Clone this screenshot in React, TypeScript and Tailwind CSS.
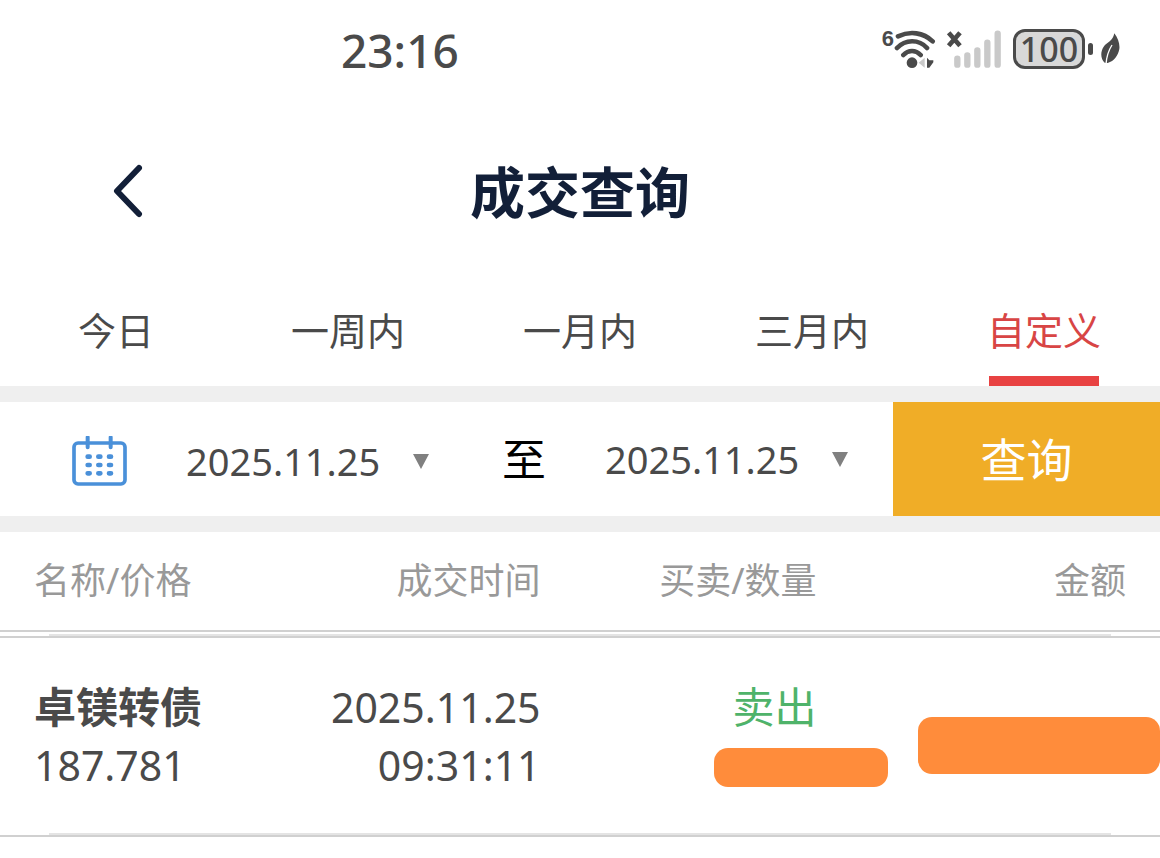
import React, { useState } from 'react'

const tabs = ['今日', '一周内', '一月内', '三月内', '自定义']

const records = [
  {
    name: '卓镁转债',
    price: '187.781',
    date: '2025.11.25',
    time: '09:31:11',
    side: '卖出',
  },
]

function StatusBar() {
  return (
    <div className="flex h-[100px] items-center justify-between pr-10 pl-[341px] text-[#4a4a4a]">
      <div className="text-[46px] leading-none font-medium">23:16</div>
      <div className="flex items-center pb-[3px]">
        <span className="self-start font-['Liberation_Sans'] text-[22px] leading-6 font-bold">6</span>
        {/* wifi icon */}
        <svg className="h-[44px] w-[43px]" viewBox="76 34 129 132" fill="none">
          <path
            d="M88 62C124 45 164 50 192 77M85 97C110 70 151 70 175 97M104 118C119 102 141 102 156 118"
            stroke="#4a4a4a"
            strokeWidth="14"
            strokeLinecap="round"
          />
          <circle cx="130" cy="141" r="16" fill="#4a4a4a" />
          <path d="M168 126V156L150 141Z" fill="#c9c9c9" />
          <path d="M175 126L182 134H194V140L182 156H175Z" fill="#4a4a4a" />
        </svg>
        {/* signal icon */}
        <svg className="ml-2 h-[44px] w-[58px]" viewBox="228 34 174 132" fill="none">
          <path
            d="M265 129V147M295 119V147M325 104V147M355 81V147M386 54V147"
            stroke="#c9c9c9"
            strokeWidth="19"
            strokeLinecap="round"
          />
          <path d="M239 51L273 90M273 51L239 90" stroke="#4a4a4a" strokeWidth="14" />
        </svg>
        {/* battery */}
        <div className="ml-[10px] flex h-10 w-[72px] items-center justify-center rounded-[12px] border-3 border-[#4a4a4a] bg-[#d8d8d8] text-[34px] leading-none font-medium">
          100
        </div>
        <div className="ml-[3px] h-3 w-[5px] rounded-full bg-[#4a4a4a]" />
        {/* leaf icon */}
        <svg className="ml-2 h-8 w-[19px]" viewBox="692 52 57 96" fill="none">
          <path
            d="M732 53C743 68 749 84 747 100C743 120 732 136 712 142L703 141C690 130 690 108 700 93C710 80 728 76 732 53Z"
            fill="#4a4a4a"
          />
          <path d="M725 88C716 102 709 118 707 146" stroke="#ffffff" strokeWidth="4" />
        </svg>
      </div>
    </div>
  )
}

function DateSelect({ label }: { label: string }) {
  return (
    <label className="flex items-center text-[#4a4a4a]">
      <select aria-label={label} className="appearance-none bg-transparent text-[38px] leading-[52px]">
        <option>2025.11.25</option>
      </select>
      <svg className="ml-8 h-[15px] w-4" viewBox="0 0 16 15">
        <path d="M0 0H16L8 15Z" fill="#808080" />
      </svg>
    </label>
  )
}

function Divider() {
  return (
    <tr>
      <td colSpan={4} className="border-b-2 border-[#d0d0d0] p-0">
        <div className="mx-[49px] h-[2px] bg-[#e4e4e4]" />
      </td>
    </tr>
  )
}

export default function App() {
  const [active, setActive] = useState(4)

  return (
    <div className="min-h-screen bg-white font-['Noto_Sans','Noto_Sans_CJK_SC',sans-serif]">
      <StatusBar />

      <header className="grid h-[180px] grid-cols-[1fr_auto_1fr] items-center pt-[2px]">
        <button aria-label="返回" className="ml-[113px] w-[30px]">
          {/* back icon */}
          <svg width="30" height="54" viewBox="0 0 30 54" fill="none">
            <path
              d="M26 4L4 27L26 50"
              stroke="#121f38"
              strokeWidth="6"
              strokeLinecap="round"
              strokeLinejoin="round"
            />
          </svg>
        </button>
        <h1 className="text-[55px] leading-none font-bold text-[#121f38]">成交查询</h1>
      </header>

      <nav className="grid h-[106px] grid-cols-5 pt-1">
        {tabs.map((tab, i) => (
          <button
            key={tab}
            onClick={() => setActive(i)}
            className={
              'flex flex-col items-center text-[38px] leading-[92px] ' +
              (i === active ? 'text-[#d84545]' : 'text-[#4a4a4a]')
            }
          >
            {tab}
            {i === active && <span className="h-[10px] w-[110px] bg-[#e84242]" />}
          </button>
        ))}
      </nav>

      <form
        onSubmit={(e) => e.preventDefault()}
        className="flex h-[146px] items-stretch border-y-16 border-[#efefef]"
      >
        <div className="flex flex-1 items-center pl-[72px]">
          <div className="flex items-center pt-1">
            {/* calendar icon */}
            <svg className="mr-[59px] h-[50px] w-[55px]" viewBox="35 50 165 150" fill="none">
              <rect x="41" y="71" width="153" height="123" rx="12" stroke="#4a90d9" strokeWidth="11" />
              <path d="M82 54V84M151 54V84" stroke="#4a90d9" strokeWidth="12" strokeLinecap="round" />
              <path
                d="M82 112H88M114 112H120M146 112H152M82 137H88M114 137H120M146 137H152M82 162H88M114 162H120M146 162H152"
                stroke="#4a90d9"
                strokeWidth="14"
                strokeLinecap="round"
              />
            </svg>
            <DateSelect label="开始日期" />
          </div>
          <span className="mr-[59px] ml-[73px] text-[44px] leading-none text-black">至</span>
          <DateSelect label="结束日期" />
        </div>
        <button type="submit" className="w-[23%] bg-[#f0ad27] text-[46px] leading-none text-white">
          查询
        </button>
      </form>

      <table className="w-full table-fixed border-separate border-spacing-0 text-[#4a4a4a]">
        <thead>
          <tr className="text-right text-[36px] leading-[98px] text-[#999999] *:border-b-2 *:border-[#d0d0d0] *:p-0 *:font-normal">
            <th className="w-[25%] text-left">
              <span className="pl-[34px]">名称/价格</span>
            </th>
            <th className="w-[21.6%]">成交时间</th>
            <th className="w-[23.8%]">买卖/数量</th>
            <th>
              <span className="pr-[34px]">金额</span>
            </th>
          </tr>
          <tr>
            <td colSpan={4} className="h-[2px] p-0" />
          </tr>
          <Divider />
        </thead>
        <tbody>
          {records.map((r) => (
            <React.Fragment key={r.name}>
              <tr className="h-[195px] text-right align-top text-[41px] leading-[58px]">
                <td className="pt-10 pl-[34px] text-left">
                  <div className="text-[42px] font-bold">{r.name}</div>
                  <div>{r.price}</div>
                </td>
                <td className="pt-10">
                  <div>{r.date}</div>
                  <div>{r.time}</div>
                </td>
                <td className="pt-10">
                  <div className="text-[42px] text-[#4fb36a]">{r.side}</div>
                  {/* hidden quantity */}
                  <div className="mt-3 -mr-[71px] ml-auto h-[39px] w-[174px] rounded-[14px] bg-[#ff8c3b]" />
                </td>
                <td className="pt-[79px]">
                  {/* hidden amount */}
                  <div className="ml-auto h-[57px] w-[242px] rounded-[14px] bg-[#ff8c3b]" />
                </td>
              </tr>
              <Divider />
            </React.Fragment>
          ))}
        </tbody>
      </table>
    </div>
  )
}
